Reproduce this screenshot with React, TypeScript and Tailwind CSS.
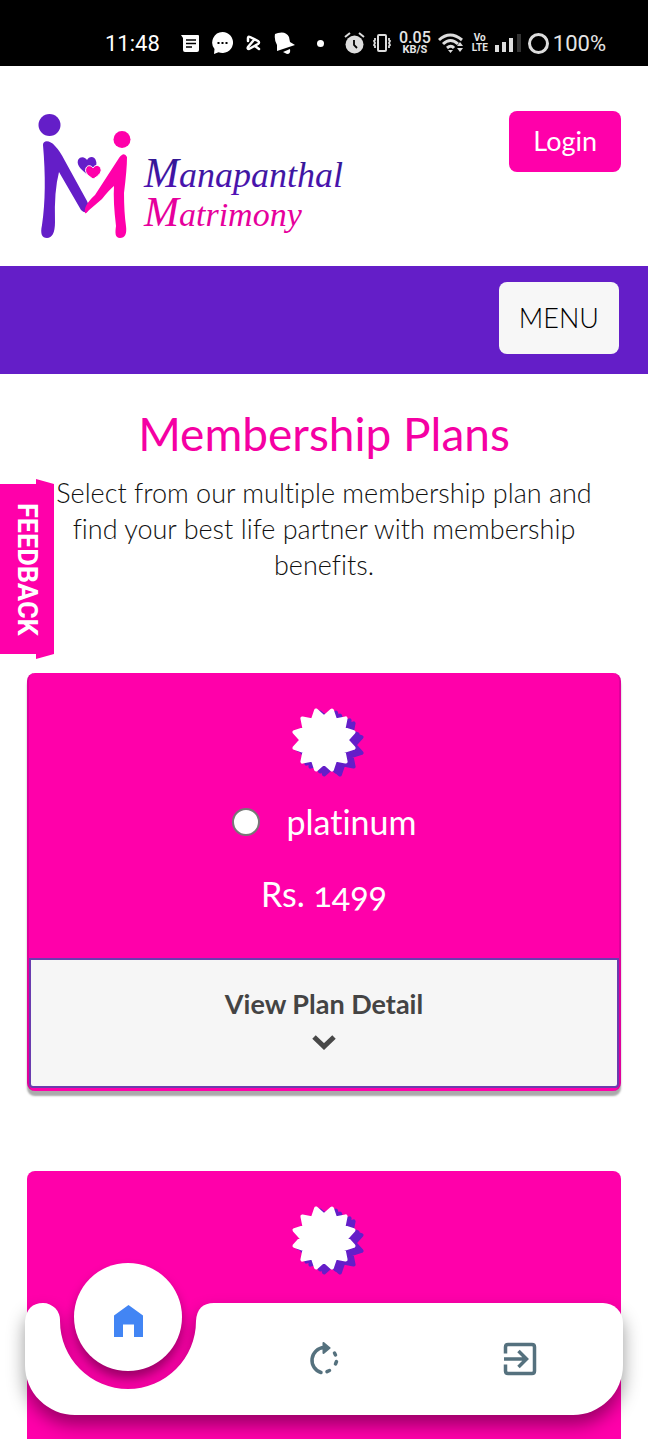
type Plan = { id: string; name?: string; price?: string };

const plans: Plan[] = [
  { id: "platinum", name: "platinum", price: "Rs. 1499" },
  { id: "next" },
];

const sealPoints = Array.from({ length: 24 }, (_, i) => {
  const angle = ((i * 15 + 15) * Math.PI) / 180;
  const r = i % 2 === 0 ? 30.5 : 22.5;
  return `${(40 + r * Math.sin(angle)).toFixed(1)},${(34 - r * Math.cos(angle)).toFixed(1)}`;
}).join(" ");

const StatusBar = () => (
  <div className="flex h-[66px] items-center bg-black pt-5 pl-[105px] font-['Roboto',sans-serif] text-[22px] text-white">
    <span className="w-14">11:48</span>
    <div className="ml-5 flex items-center gap-[13px]">
      <svg width="18" height="17" viewBox="0 0 18 17">
        <path d="M0 0h17q1 0 1 1v14q0 2-2 2H4q-2 0-2-2V3z" fill="#fff" />
        <path d="M5 5h10M5 8.500h10M5 12h6" stroke="#000" strokeWidth="1.500" />
      </svg>
      <svg width="21" height="22" viewBox="0 0 21 22">
        <path d="M10.500 0a10.500 10.500 0 1 1-4 20.200L2 22l.5-5A10.500 10.500 0 0 1 10.500 0z" fill="#fff" />
        <path d="M5.500 11h2M9.500 11h2M13.500 11h2" stroke="#000" strokeWidth="1.800" />
      </svg>
      <svg width="15" height="16" viewBox="0 0 15 16" fill="none" stroke="#fff" strokeWidth="2.500" strokeLinejoin="round" strokeLinecap="round">
        <path d="M2 6V3q0-2 2-1l8 4q2 1.500 0 3l-9 5q-2 0-1-2l5-6M9 11l4 3" />
      </svg>
      <svg width="21" height="22" viewBox="0 0 21 22" fill="#fff">
        <path d="M1 2l3-1q8-2 11 4l1 5 5 3-18 6 0-6q-3-5-2-11z" />
        <path d="M9 20l7-3q1 5-3 5z" />
      </svg>
    </div>
    <span className="ml-[22px] size-[7px] rounded-full bg-white" />
    <div className="ml-5 flex items-center gap-[7px] text-[#e5e5e5]">
      <svg width="21" height="22" viewBox="0 0 21 22">
        <circle cx="10.500" cy="12.500" r="9" fill="#ddd" />
        <path d="M1 5l5-4M20 5l-5-4" stroke="#ddd" strokeWidth="2" />
        <path d="M10 8v5l3 3" fill="none" stroke="#000" strokeWidth="1.800" />
      </svg>
      <svg width="20" height="18" viewBox="0 0 20 18" fill="none" stroke="#ddd" strokeWidth="2">
        <rect x="6" y="1" width="8" height="16" rx="1" />
        <path d="M3 4v2l-1 1 1 2-1 2 1 1v2M17 4v2l1 1-1 2 1 2-1 1v2" strokeWidth="1.800" />
      </svg>
      <span className="flex flex-col items-center text-[16px] leading-[13px] font-medium">
        0.05
        <span className="text-[11px] leading-[11px] font-bold">KB/S</span>
      </span>
      <svg width="27" height="20" viewBox="0 0 27 20" fill="none" stroke="#ddd" strokeWidth="3">
        <path d="M1 7q11-10 23 0M5 11q7.500-7 15 0M9 15q4-3.500 7 0" />
        <path d="M10 17h5l-2.500 3zM19 13l3-4 3 4zM19 15h6l-3 4z" fill="#ddd" stroke="none" />
      </svg>
      <span className="text-center text-[10px] leading-[10px] font-bold">
        Vo
        <span className="block">LTE</span>
      </span>
      <svg width="26" height="18" viewBox="0 0 26 18" fill="#ddd">
        <path d="M0 11h4v7H0zM7 8h4v10H7zM14 4h4v14h-4z" />
        <path d="M22 0h4v18h-4z" fill="#333" />
      </svg>
      <span className="flex items-center gap-1">
        <span className="size-[21px] rounded-full border-[3px] border-[#ddd]" />
        100%
      </span>
    </div>
  </div>
);

const Logo = () => (
  <svg className="overflow-visible" width="310" height="145" viewBox="0 2 310 145" role="img" aria-label="Manapanthal Matrimony">
    <defs>
      <linearGradient id="violet" x1="0" y1="0" x2="0" y2="1">
        <stop offset="0" stopColor="#2a1a8c" />
        <stop offset="1" stopColor="#5410b8" />
      </linearGradient>
    </defs>
    <circle cx="15.500" cy="16" r="11" fill="#641ec8" />
    <circle cx="88" cy="30.500" r="8.500" fill="#ff00aa" />
    <path
      d="M9 36C9 31 16 31 21 37Q26 42 31 52L53 92Q56 98 54 102Q51 105 47 101L25 63Q20 82 21 113C21 124 18 129 13 129C8 129 6 125 8 116Q13 82 9 36z"
      fill="#641ec8"
    />
    <path
      d="M51 104Q49 97 61 86L85 49Q90 42 93 48Q93 60 90 84Q90 103 92 117C93 125 91 129 86 129C81 129 81 124 82 117Q79 92 80 77Q75 81 68 90L54 102Q52 105 51 104z"
      fill="#ff00aa"
    />
    <path d="M54 66c-5-4-12-9-10-15 3-5 8-2 9 0 2-4 8-4 9 1 2 5-3 10-8 14z" fill="#641ec8" />
    <path d="M59 70c-4-3-9-6-7-11 2-4 6-2 7 0 2-4 7-3 8 1 1 4-4 8-8 10z" fill="#ff00aa" stroke="#fff" strokeWidth="1" />
    <text x="110" y="78" fill="url(#violet)" fontFamily="'Liberation Serif', serif" fontStyle="italic" fontSize="36">
      <tspan fontSize="42">M</tspan>anapanthal
    </text>
    <text x="110" y="117" fill="#e6009c" fontFamily="'Liberation Serif', serif" fontStyle="italic" fontSize="34">
      <tspan fontSize="42">M</tspan>atrimony
    </text>
  </svg>
);

const Seal = () => (
  <svg width="80" height="76" viewBox="0 0 80 76" strokeWidth="4" strokeLinejoin="round">
    <g fill="#641ec8" stroke="#641ec8">
      <polygon points={sealPoints} transform="translate(4 2)" />
      <polygon points={sealPoints} transform="translate(8 5)" />
    </g>
    <polygon points={sealPoints} fill="#fff" stroke="#fff" />
  </svg>
);

const PlanCard = ({ plan }: { plan: Plan }) => {
  if (!plan.name) {
    return (
      <article className="flex h-[268px] justify-center rounded-t-lg bg-[#ff00aa] pt-[33px]">
        <Seal />
      </article>
    );
  }
  return (
    <article className="rounded-lg border-x-2 border-[#e0009c] bg-[#ff00aa] pb-[3px] text-white shadow-[0_5px_2px_#aaa]">
      <div className="flex h-[285px] flex-col items-center pt-[33px]">
        <Seal />
        <div className="mt-[18px] flex items-center gap-[27px]">
          <input
            type="radio"
            name="plan"
            id={plan.id}
            className="size-7 appearance-none rounded-full border-2 border-[#777] bg-white checked:bg-blue-500"
          />
          <label htmlFor={plan.id} className="text-[34px] leading-[44px]">
            {plan.name}
          </label>
        </div>
        <p className="mt-7 text-[34px] leading-[44px] oldstyle-nums">{plan.price}</p>
      </div>
      <button className="flex h-[130px] w-full flex-col items-center rounded-b-sm border-2 border-[#6a3cae] bg-[#f6f6f6] pt-[26px] text-[27px] leading-[36px] font-bold text-[#444]">
        View Plan Detail
        <svg className="mt-3" width="24" height="16" viewBox="0 0 24 16" fill="none" stroke="#484848" strokeWidth="5">
          <path d="M2 3l10 9.500L22 3" />
        </svg>
      </button>
    </article>
  );
};

const BottomNav = () => (
  <nav className="fixed inset-x-[25px] bottom-[25px] h-28">
    <div className="absolute inset-0 flex drop-shadow-[0_10px_9px_rgba(0,0,0,0.4)]">
      <svg className="shrink-0" width="200" height="112" viewBox="0 0 200 112">
        <path d="M0 18Q2 0 18 0A17 17 0 0 1 35 18A68 68 0 0 0 171 18Q172 0 189 0H200V112H50A50 50 0 0 1 0 62z" fill="#fff" />
      </svg>
      <div className="-ml-px flex-1 rounded-tr-[20px] rounded-br-[50px] bg-white" />
    </div>
    <div className="relative grid h-full grid-cols-3 items-center justify-items-center px-[5px] text-[#55717e]">
      <a
        href="#home"
        aria-label="Home"
        className="-mt-[84px] flex size-[108px] items-center justify-center rounded-full bg-white pt-2 shadow-[0_8px_12px_rgba(0,0,0,0.4)]"
      >
        <svg width="29" height="32" viewBox="0 0 29 32" fill="#4285f4">
          <path d="M14.500 0L29 10.500V32H20V19.500H9V32H0V10.500z" />
        </svg>
      </a>
      <a href="#refresh" aria-label="Refresh">
        <svg width="30" height="34" viewBox="0 0 30 34" fill="none" stroke="currentColor" strokeWidth="3.500" strokeLinecap="round">
          <path d="M15 5.500A12.800 12.800 0 0 0 12 30.500" />
          <path d="M14.500 1v10l6-5z" fill="currentColor" strokeWidth="2" strokeLinejoin="round" />
          <path d="M25.500 11l1 2M27.500 19.500l-1 2.500M20.500 28.500l-2.500 1.200" />
        </svg>
      </a>
      <a href="#exit" aria-label="Exit">
        <svg width="34" height="34" viewBox="0 0 34 34" fill="none" stroke="currentColor" strokeWidth="3.500">
          <path d="M2.500 11.500V5q0-2.500 2.500-2.500h24q2.500 0 2.500 2.500v24q0 2.500-2.500 2.500H5q-2.500 0-2.500-2.500v-6.500" />
          <path d="M1 17h22M15.500 9l8 8-8 8" />
        </svg>
      </a>
    </div>
  </nav>
);

const App = () => {
  return (
    <div className="relative min-h-screen bg-white font-['Lato',sans-serif] text-[#111] [font-variant-ligatures:no-common-ligatures]">
      <StatusBar />

      <header>
        <div className="flex h-[200px] items-start justify-between pt-[45px] pr-[27px] pl-[34px]">
          <Logo />
          <button className="h-[61px] rounded-lg bg-[#ff00aa] px-6 text-[27px] text-white">Login</button>
        </div>
        <div className="flex h-[108px] items-start justify-end bg-[#641ec8] pt-4 pr-[29px]">
          <button className="h-[72px] rounded-lg bg-[#f7f7f7] px-5 text-[27px] font-light text-black">MENU</button>
        </div>
      </header>

      <main className="px-[27px]">
        <section className="pt-8 text-center">
          <h1 className="text-[46px] leading-[56px] text-[#f500a3]">Membership Plans</h1>
          <p className="mt-[13px] px-5 text-[27px] leading-[36px] font-light">
            Select from our multiple membership plan and find your best life partner with membership benefits.
          </p>
        </section>

        {/* Plans */}
        <div className="mt-[90px] space-y-20">
          {plans.map((plan) => (
            <PlanCard key={plan.id} plan={plan} />
          ))}
        </div>
      </main>

      {/* Feedback ribbon */}
      <button className="absolute top-[479px] left-0 flex h-[180px] w-[54px] items-center justify-center bg-[#ff00aa] font-['Roboto',sans-serif] text-[27px] font-bold text-white [clip-path:polygon(0_5px,36px_5px,36px_0,100%_5px,100%_175px,36px_100%,36px_175px,0_175px)] [writing-mode:vertical-rl]">
        FEEDBACK
      </button>

      <BottomNav />
    </div>
  );
};

export default App;
